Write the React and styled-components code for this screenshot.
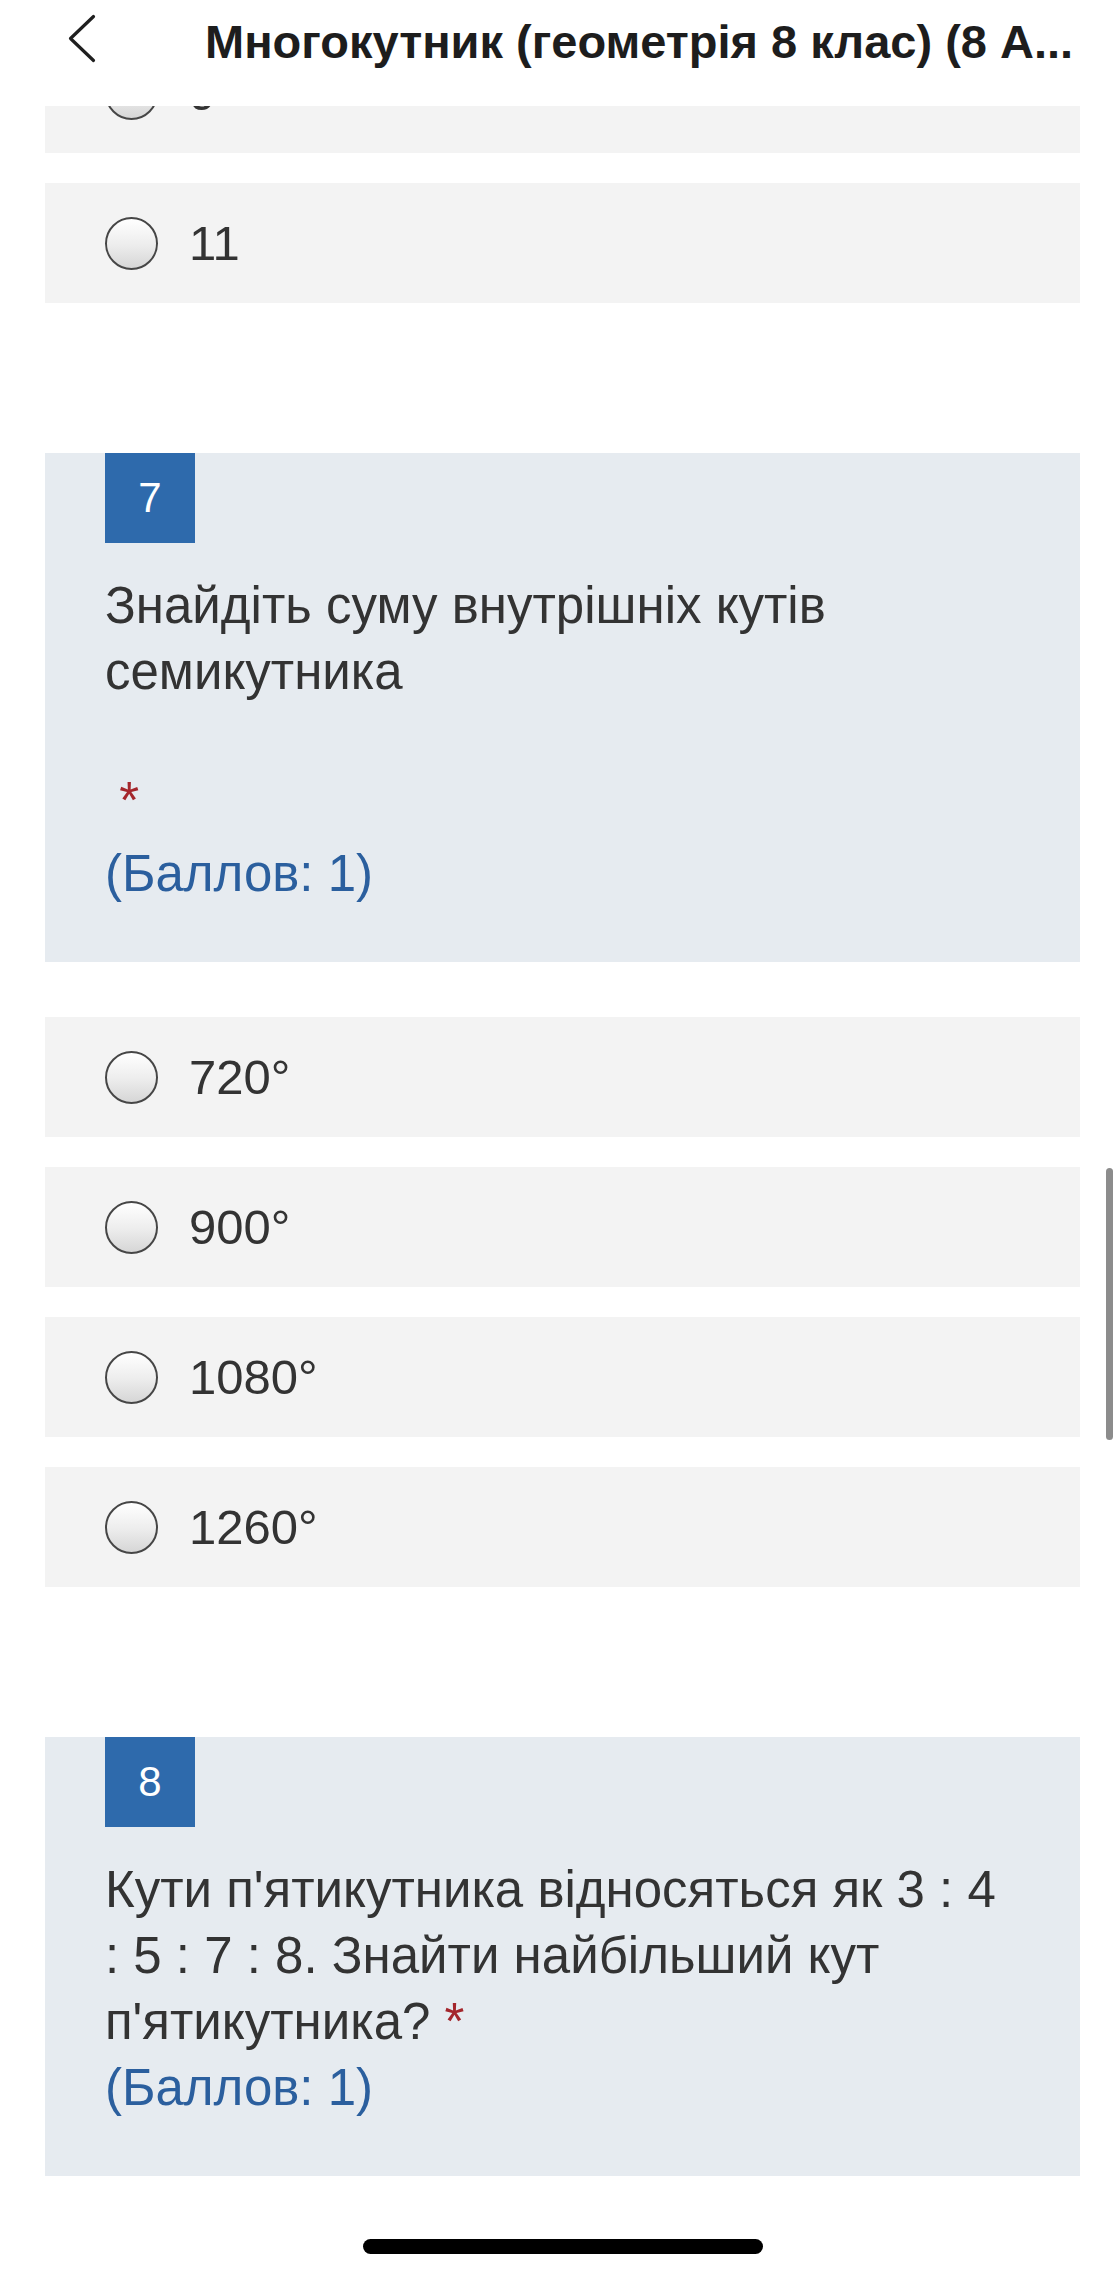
import React from "react";
import styled, { createGlobalStyle } from "styled-components";

const GlobalStyle = createGlobalStyle`
    html, body {
        margin: 0;
        padding: 0;
        background: #ffffff;
    }
    body {
        font-family: "Liberation Sans", Arial, Helvetica, sans-serif;
        color: #333333;
    }
`;

//DATA
const questions = [
    {
        number: 7,
        text: "Знайдіть суму внутрішніх кутів семикутника",
        requiredOnOwnLine: true,
        points: 1,
        options: ["720°", "900°", "1080°", "1260°"],
    },
    {
        number: 8,
        text: "Кути п'ятикутника відносяться як 3 : 4 : 5 : 7 : 8. Знайти найбільший кут п'ятикутника?",
        requiredOnOwnLine: false,
        points: 1,
        options: [],
    },
];

function Option({ label }) {
    return (
        <OptionCard>
            <Radio />
            <OptionLabel>{label}</OptionLabel>
        </OptionCard>
    );
}

function Question({ data }) {
    return (
        <>
            <QuestionBlock>
                <NumberBadge>{data.number}</NumberBadge>
                <QuestionText>
                    {data.requiredOnOwnLine ? (
                        <>
                            <Paragraph>{data.text}</Paragraph>
                            <BlankLine />
                            <RequiredLine>
                                {" "}
                                <Required>*</Required>
                            </RequiredLine>
                        </>
                    ) : (
                        <Paragraph>
                            {data.text} <Required>*</Required>
                        </Paragraph>
                    )}
                    <Points>(Баллов: {data.points})</Points>
                </QuestionText>
            </QuestionBlock>
            {data.options.length > 0 && (
                <OptionList $top={55}>
                    {data.options.map((o) => (
                        <Option key={o} label={o} />
                    ))}
                </OptionList>
            )}
        </>
    );
}

export default function App() {
    return (
        <Page>
            <GlobalStyle />
            <TopBar>
                <BackButton aria-label="back">
                    <svg width="32" height="52" viewBox="0 0 32 52" fill="none">
                        <path
                            d="M27.5 3.5 L4.5 25.5 L27.5 47.5"
                            stroke="#1f1f1f"
                            strokeWidth="3.2"
                            strokeLinecap="round"
                            strokeLinejoin="round"
                        />
                    </svg>
                </BackButton>
                <Title>Многокутник (геометрія 8 клас) (8 А...</Title>
            </TopBar>

            <Content>
                {/* tail of question 6 */}
                <OptionList $top={0}>
                    <Option label="9" />
                    <Option label="11" />
                </OptionList>

                {questions.map((q) => (
                    <Section key={q.number}>
                        <Question data={q} />
                    </Section>
                ))}
            </Content>

            <ScrollThumb />
            <HomeIndicator />
        </Page>
    );
}

const Page = styled.div`
    position: relative;
    min-height: 2278px;
    background: #ffffff;
`;

const TopBar = styled.header`
    position: fixed;
    top: 0;
    left: 0;
    right: 0;
    height: 106px;
    z-index: 10;
    display: flex;
    align-items: flex-start;
    padding-top: 13px;
    box-sizing: border-box;
    background: #ffffff;
`;

const BackButton = styled.button`
    margin-left: 66px;
    padding: 0;
    border: none;
    background: none;
    width: 32px;
    height: 52px;
    display: flex;
    cursor: pointer;
`;

const Title = styled.h1`
    margin: 2px 0 0 107px;
    font-size: 47px;
    font-weight: 700;
    line-height: 53px;
    color: #1d1d1d;
    white-space: nowrap;
`;

const Content = styled.main`
    display: flex;
    flex-direction: column;
    padding: 33px 35px 102px 45px;
`;

const Section = styled.section`
    margin-top: 150px;
`;

const OptionList = styled.div`
    display: flex;
    flex-direction: column;
    gap: 30px;
    margin-top: ${(p) => p.$top}px;
`;

const OptionCard = styled.label`
    display: flex;
    align-items: center;
    gap: 31px;
    height: 120px;
    padding: 0 60px;
    background: #f3f3f3;
    cursor: pointer;
`;

const Radio = styled.span`
    flex: none;
    width: 53px;
    height: 53px;
    box-sizing: border-box;
    border-radius: 50%;
    border: 2.5px solid #464646;
    background: linear-gradient(to bottom, #ffffff 0%, #ececec 55%, #d6d6d6 100%);
`;

const OptionLabel = styled.span`
    font-size: 49px;
    color: #333333;
`;

const QuestionBlock = styled.div`
    padding: 0 75px 55px 60px;
    background: #e6ebf0;
`;

const NumberBadge = styled.div`
    width: 90px;
    height: 90px;
    display: flex;
    align-items: center;
    justify-content: center;
    background: #2e6aac;
    color: #ffffff;
    font-size: 42px;
`;

const QuestionText = styled.div`
    margin-top: 30px;
    font-size: 51px;
    line-height: 66px;
    color: #333333;
`;

const Paragraph = styled.p`
    margin: 0;
    white-space: pre-wrap;
`;

const BlankLine = styled.div`
    height: 63px;
`;

const RequiredLine = styled(Paragraph)`
    margin-bottom: 7px;
`;

const Required = styled.span`
    color: #a4262c;
`;

const Points = styled.div`
    color: #2b5f9e;
`;

const ScrollThumb = styled.div`
    position: fixed;
    top: 1168px;
    right: 2px;
    width: 7px;
    height: 272px;
    border-radius: 4px;
    background: #8c8c8c;
`;

const HomeIndicator = styled.div`
    position: fixed;
    bottom: 24px;
    left: 363px;
    width: 400px;
    height: 15px;
    border-radius: 8px;
    background: #000000;
`;
